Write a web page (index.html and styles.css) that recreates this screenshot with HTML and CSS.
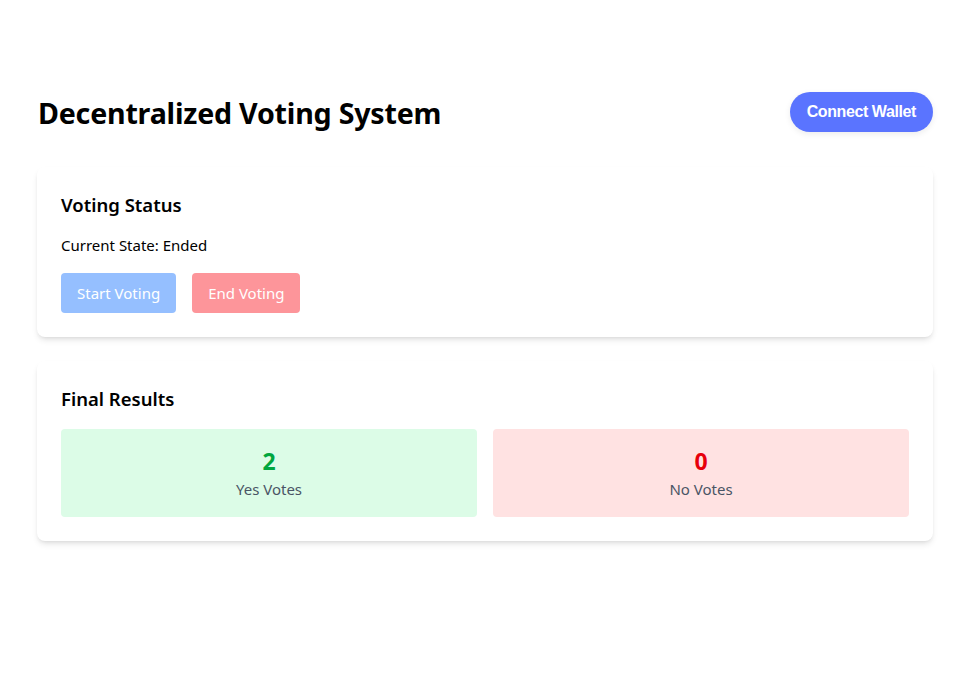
FILE: index.html
```html
<!DOCTYPE html>
<html>
<head>
<meta charset="utf-8">
<link rel="stylesheet" href="styles.css">
</head>
<body>
<main class="page">
  <header class="header">
    <h1 class="title">Decentralized Voting System</h1>
    <button class="connect">Connect Wallet</button>
  </header>
  <section class="card">
    <h2 class="card-title card-title-status">Voting Status</h2>
    <p class="state">Current State: Ended</p>
    <div class="actions">
      <button class="btn btn-start">Start Voting</button>
      <button class="btn btn-end">End Voting</button>
    </div>
  </section>
  <section class="card">
    <h2 class="card-title">Final Results</h2>
    <div class="results">
      <div class="result result-yes">
        <div class="count count-yes">2</div>
        <div class="label">Yes Votes</div>
      </div>
      <div class="result result-no">
        <div class="count count-no">0</div>
        <div class="label">No Votes</div>
      </div>
    </div>
  </section>
</main>
</body>
</html>
```

FILE: styles.css
```css
* { box-sizing: border-box; }
html, body { margin: 0; padding: 0; background: #fff; }
body {
  font-family: "Noto Sans", "Open Sans", sans-serif;
  color: #000;
}
.page {
  width: 896px;
  margin-left: 37px;
  padding-top: 92px;
}
.header {
  display: flex;
  justify-content: space-between;
  align-items: center;
  height: 40px;
  margin-bottom: 35px;
}
.title {
  margin: 2px 0 0 1px;
  font-size: 28.6px;
  line-height: 36px;
  font-weight: 700;
  letter-spacing: -0.2px;
}
.connect {
  height: 40px;
  padding: 0 17px;
  border: none;
  border-radius: 20px;
  background: #5a74ff;
  color: #fff;
  font-family: "Liberation Sans", Arial, sans-serif;
  font-weight: 700;
  font-size: 16px;
  letter-spacing: -0.4px;
  box-shadow: 0 2px 6px rgba(0,0,0,0.08);
}
.card {
  background: #fff;
  border-radius: 8px;
  padding: 24px;
  margin-bottom: 24px;
  box-shadow: 0 4px 6px -1px rgba(0,0,0,0.1), 0 2px 4px -2px rgba(0,0,0,0.1);
}
.card-title {
  margin: 0 0 16px;
  font-size: 18.5px;
  line-height: 28px;
  font-weight: 600;
}
.card-title-status {
  margin-bottom: 14px;
}
.state {
  margin: 0 0 16px;
  font-size: 15px;
  line-height: 24px;
}
.actions {
  display: flex;
  gap: 16px;
}
.btn {
  height: 40px;
  padding: 0 16px;
  border: none;
  border-radius: 4px;
  color: #fff;
  font-family: inherit;
  font-size: 15px;
}
.btn-start { background: #95bfff; }
.btn-end { background: #fd959a; }
.results {
  display: grid;
  grid-template-columns: 1fr 1fr;
  gap: 16px;
}
.result {
  border-radius: 4px;
  padding: 16px;
  text-align: center;
}
.result-yes { background: #dcfce7; }
.result-no { background: #ffe2e2; }
.count {
  font-size: 23px;
  line-height: 32px;
  font-weight: 700;
}
.count-yes { color: #00a63e; }
.count-no { color: #e7000b; }
.label {
  font-size: 15px;
  line-height: 24px;
  color: #4a5565;
}
```
